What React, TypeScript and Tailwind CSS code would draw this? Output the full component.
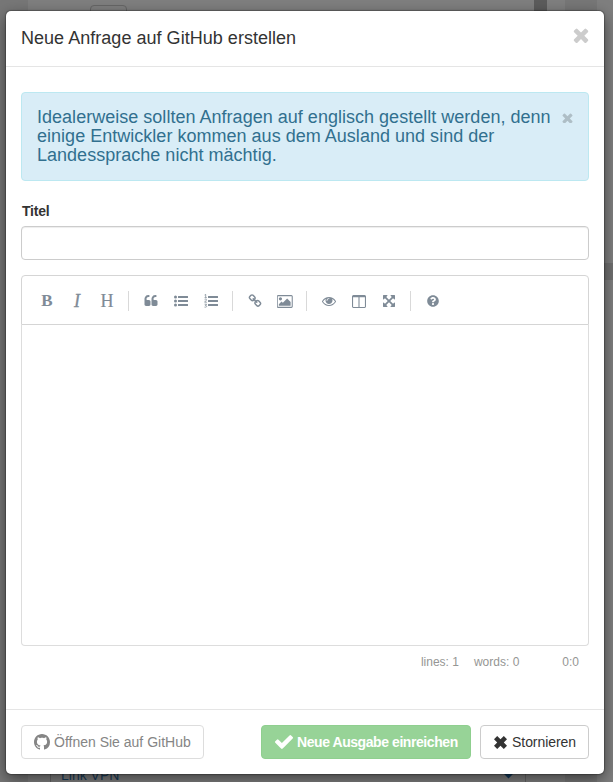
import React from 'react';
import { FaQuestionCircle } from 'react-icons/fa';

const icons = {
  quote:
    'M832 960v384q0 80-56 136t-136 56h-384q-80 0-136-56t-56-136v-704q0-104 40.5-198.5t109.5-163.5 163.5-109.5 198.5-40.5h64q26 0 45 19t19 45v128q0 26-19 45t-45 19h-64q-106 0-181 75t-75 181v32q0 40 28 68t68 28h224q80 0 136 56t56 136zm896 0v384q0 80-56 136t-136 56h-384q-80 0-136-56t-56-136v-704q0-104 40.5-198.5t109.5-163.5 163.5-109.5 198.5-40.5h64q26 0 45 19t19 45v128q0 26-19 45t-45 19h-64q-106 0-181 75t-75 181v32q0 40 28 68t68 28h224q80 0 136 56t56 136z',
  link:
    'M1520 1216q0-40-28-68l-208-208q-28-28-68-28-42 0-72 32 3 3 19 18.5t21.5 21.5 15 19 13 25.5 3.5 27.5q0 40-28 68t-68 28q-15 0-27.5-3.5t-25.5-13-19-15-21.5-21.5-18.5-19q-33 31-33 73 0 40 28 68l206 207q27 27 68 27 40 0 68-26l147-146q28-28 28-67zm-703-705q0-40-28-68l-206-207q-28-28-68-28-39 0-68 27l-147 146q-28 28-28 67 0 40 28 68l208 208q27 27 68 27 42 0 72-31-3-3-19-18.5t-21.5-21.5-15-19-13-25.5-3.5-27.5q0-40 28-68t68-28q15 0 27.5 3.5t25.5 13 19 15 21.5 21.5 18.5 19q33-31 33-73zm895 705q0 120-85 203l-147 146q-83 83-203 83-121 0-204-85l-206-207q-83-83-83-203 0-123 88-209l-88-88q-86 88-208 88-120 0-204-84l-208-208q-84-84-84-204t85-203l147-146q83-83 203-83 121 0 204 85l206 207q83 83 83 203 0 123-88 209l88 88q86-88 208-88 120 0 204 84l208 208q84 84 84 204z',
  picture:
    'M576 576q0 80-56 136t-136 56-136-56-56-136 56-136 136-56 136 56 56 136zm1024 384v448h-1408v-192l320-320 160 160 512-512zm96-704h-1600q-13 0-22.5 9.5t-9.5 22.5v1216q0 13 9.5 22.5t22.5 9.5h1600q13 0 22.5-9.5t9.5-22.5v-1216q0-13-9.5-22.5t-22.5-9.5zm160 32v1216q0 66-47 113t-113 47h-1600q-66 0-113-47t-47-113v-1216q0-66 47-113t113-47h1600q66 0 113 47t47 113z',
  eye:
    'M1664 960q-152-236-381-353 61 104 61 225 0 185-131.5 316.5t-316.5 131.5-316.5-131.5-131.5-316.5q0-121 61-225-229 117-381 353 133 205 333.5 326.5t434.5 121.5 434.5-121.5 333.5-326.5zm-720-384q0-20-14-34t-34-14q-125 0-214.5 89.5t-89.5 214.5q0 20 14 34t34 14 34-14 14-34q0-86 61-147t147-61q20 0 34-14t14-34zm848 384q0 34-20 69-140 230-376.5 368.5t-499.5 138.5-499.5-139-376.5-368q-20-35-20-69t20-69q140-229 376.5-368t499.5-139 499.5 139 376.5 368q20 35 20 69z',
  columns:
    'M160 1536h608v-1152h-640v1120q0 13 9.5 22.5t22.5 9.5zm1376-32v-1120h-640v1152h608q13 0 22.5-9.5t9.5-22.5zm128-1216v1216q0 66-47 113t-113 47h-1344q-66 0-113-47t-47-113v-1216q0-66 47-113t113-47h1344q66 0 113 47t47 113z',
  arrows:
    'M1411 541l-355 355 355 355 144-144q29-31 70-14 39 17 39 59v448q0 26-19 45t-45 19h-448q-42 0-59-40-17-39 14-69l144-144-355-355-355 355 144 144q31 30 14 69-17 40-59 40h-448q-26 0-45-19t-19-45v-448q0-42 40-59 39-17 69 14l144 144 355-355-355-355-144 144q-19 19-45 19-12 0-24-5-40-17-40-59v-448q0-26 19-45t45-19h448q42 0 59 40 17 39-14 69l-144 144 355 355 355-355-144-144q-31-30-14-69 17-40 59-40h448q26 0 45 19t19 45v448q0 42-39 59-13 5-25 5-26 0-45-19z',
  check:
    'M1671 566q0 40-28 68l-724 724-136 136q-28 28-68 28t-68-28l-136-136-362-362q-28-28-28-68t28-68l136-136q28-28 68-28t68 28l294 295 656-657q28-28 68-28t68 28l136 136q28 28 28 68z',
  close:
    'M1490 1322q0 40-28 68l-136 136q-28 28-68 28t-68-28l-294-294-294 294q-28 28-68 28t-68-28l-136-136q-28-28-28-68t28-68l294-294-294-294q-28-28-28-68t28-68l136-136q28-28 68-28t68 28l294 294 294-294q28-28 68-28t68 28l136 136q28 28 28 68t-28 68l-294 294 294 294q28 28 28 68z',
};

function Glyph({ d, box = '0 0 1792 1792', className = 'h-[14px] w-[14px]' }: { d: string; box?: string; className?: string }) {
  return (
    <svg viewBox={box} fill="currentColor" className={className}>
      <path d={d} />
    </svg>
  );
}

function ListGlyph({ ordered = false }: { ordered?: boolean }) {
  return (
    <svg viewBox="0 0 14 14" fill="currentColor" className="h-[14px] w-[14px]">
      {ordered ? (
        <g fill="none" stroke="currentColor" strokeWidth="0.8">
          <path d="M.6 1 1.7.4v3.2M.5 3.7h2.4M.6 5.7c1-1 2.2-.5 1.8.4L.6 8.2h2.3M.6 10.2h2L1.4 11.5c2-.2 1.7 2.2-.9 1.6" />
        </g>
      ) : (
        <g>
          <circle cx="1.5" cy="3" r="1.5" />
          <circle cx="1.5" cy="7" r="1.5" />
          <circle cx="1.5" cy="11" r="1.5" />
        </g>
      )}
      <rect x="4" y="2" width="10" height="2" rx=".3" />
      <rect x="4" y="6" width="10" height="2" rx=".3" />
      <rect x="4" y="10" width="10" height="2" rx=".3" />
    </svg>
  );
}

function Tool({ children }: { children: React.ReactNode }) {
  return <button className="flex h-[30px] w-[30px] items-center justify-center">{children}</button>;
}

function Separator() {
  return <i className="mr-[7px] ml-[6px] h-5 w-px bg-[#d9d9d9]" />;
}

function Backdrop() {
  return (
    <div className="absolute inset-0 flex flex-col justify-between bg-[#7f7f7f]">
      <div className="absolute inset-y-0 left-0 w-[28px] bg-[#777]" />
      <div className="absolute top-0 left-[534px] h-3 w-[13px] bg-[#5c5c5c]" />
      <div className="absolute inset-y-0 left-[565px] w-[32px] bg-[#777]" />
      <div className="absolute top-[263px] right-0 h-[17px] w-[9px] bg-[#707070]" />
      <div className="mt-[5px] ml-[90px] h-6 w-[37px] rounded border border-[#666]" />
      <div className="ml-[50px] flex h-5 w-[476px] items-center justify-between border-x border-[#666] pr-[13px] pl-[10px] text-[14px] text-[#1a3d5a]">
        <span className="pt-[5px] leading-4">Link VPN</span>
        <span className="mt-[2px] h-[7px] w-[7px] rotate-45 bg-[#123a5c]" />
      </div>
    </div>
  );
}

export default function App() {
  return (
    <div className="relative h-[782px] w-[613px] overflow-hidden pt-[11px] pl-[6px] font-['Liberation_Sans',Arial,sans-serif] text-[#333]">
      <Backdrop />
      <main className="relative flex h-[763px] w-[598px] flex-col rounded-[5px] bg-white shadow-[0_5px_15px_rgba(0,0,0,0.5),0_0_1px_1px_rgba(0,0,0,0.25)]">
        <header className="flex h-[56px] shrink-0 justify-between border-b border-[#e5e5e5] pr-[15px] pl-[15px]">
          <h1 className="pt-[17px] text-[18px] leading-5 tracking-[0.03px]">Neue Anfrage auf GitHub erstellen</h1>
          <button className="mt-[16px] h-4 w-4 text-[#ccc]">
            <Glyph d={icons.close} box="302 238 1188 1316" className="h-4 w-4" />
          </button>
        </header>
        <section className="flex grow flex-col px-[15px] pt-[25px]">
          <div className="flex h-[89px] shrink-0 justify-between rounded-[4px] border border-[#bce8f1] bg-[#d9edf7] pt-[15px] pr-[15px] pl-[15px] text-[#31708f]">
            <p className="text-[18px] leading-[19px] tracking-[0.02px] whitespace-nowrap">
              Idealerweise sollten Anfragen auf englisch gestellt werden, denn
              <br />
              einige Entwickler kommen aus dem Ausland und sind der
              <br />
              Landessprache nicht mächtig.
            </p>
            <button className="mt-[5px] h-[10px] w-[11px] text-[#aebec6]">
              <Glyph d={icons.close} box="302 302 1188 1188" className="h-[10px] w-[11px]" />
            </button>
          </div>
          <label className="mt-[20px] pl-px text-[14px] leading-5 font-bold tracking-[-0.2px]">Titel</label>
          <input className="mt-[5px] h-[34px] shrink-0 rounded-[4px] border border-[#ccc] shadow-[inset_0_1px_1px_rgba(0,0,0,0.075)]" />
          <div className="mt-[15px] flex h-[50px] shrink-0 items-center rounded-t-[4px] border border-[#d5d5d5] pt-[2px] pl-[10px] font-['Liberation_Serif',serif] text-[18px] text-[#7f8b97]">
            <div className="flex items-center">
              <Tool><b className="text-[17px]">B</b></Tool>
              <Tool><i className="[-webkit-text-stroke:0.3px_#7f8b97]">I</i></Tool>
              <Tool><span className="[-webkit-text-stroke:0.2px_#7f8b97]">H</span></Tool>
              <Separator />
              <Tool><Glyph d={icons.quote} /></Tool>
              <Tool><ListGlyph /></Tool>
              <Tool><ListGlyph ordered /></Tool>
              <Separator />
              <Tool><Glyph d={icons.link} /></Tool>
              <Tool><Glyph d={icons.picture} box="0 0 1856 1792" className="h-[15px] w-4" /></Tool>
              <Separator />
              <Tool><Glyph d={icons.eye} /></Tool>
              <Tool><Glyph d={icons.columns} box="0 128 1664 1536" className="h-[13px] w-[14px]" /></Tool>
              <Tool><Glyph d={icons.arrows} /></Tool>
              <Separator />
              <Tool><FaQuestionCircle className="h-3 w-3" /></Tool>
            </div>
          </div>
          <div className="h-[321px] shrink-0 rounded-b-[4px] border border-t-0 border-[#ddd]" />
          <div className="flex justify-end pt-[9px] pr-[10px] text-[12px] leading-[14px] text-[#959694]">
            <span>lines: 1</span>
            <span className="ml-[15px]">words: 0</span>
            <span className="ml-[43px]">0:0</span>
          </div>
        </section>
        <footer className="flex h-[65px] shrink-0 border-t border-[#e5e5e5] px-[15px] pt-[15px] text-[14px]">
          <button className="flex h-[34px] w-[183px] items-center gap-[4px] rounded-[4px] border border-[#ddd] pl-3 whitespace-nowrap text-[#858585]">
            <svg viewBox="0 0 16 16" fill="currentColor" className="h-4 w-4">
              <path d="M8 0C3.58 0 0 3.58 0 8c0 3.54 2.29 6.53 5.47 7.59.4.07.55-.17.55-.38 0-.19-.01-.82-.01-1.49-2.01.37-2.53-.49-2.69-.94-.09-.23-.48-.94-.82-1.13-.28-.15-.68-.52-.01-.53.63-.01 1.08.58 1.23.82.72 1.21 1.87.87 2.33.66.07-.52.28-.87.51-1.07-1.78-.2-3.64-.89-3.64-3.95 0-.87.31-1.59.82-2.15-.08-.2-.36-1.02.08-2.12 0 0 .67-.21 2.2.82.64-.18 1.32-.27 2-.27s1.36.09 2 .27c1.53-1.04 2.2-.82 2.2-.82.44 1.1.16 1.92.08 2.12.51.56.82 1.27.82 2.15 0 3.07-1.87 3.75-3.65 3.95.29.25.54.73.54 1.48 0 1.07-.01 1.93-.01 2.2 0 .21.15.46.55.38A8.01 8.01 0 0 0 16 8c0-4.42-3.58-8-8-8z" />
            </svg>
            <span>Öffnen Sie auf GitHub</span>
          </button>
          <button className="ml-[57px] flex h-[34px] w-[210px] items-center gap-[4px] rounded-[4px] border border-[#8fcf8f] bg-[#97d397] pl-[13px] font-bold whitespace-nowrap text-white">
            <Glyph d={icons.check} box="121 334 1550 1188" className="h-[14px] w-[18px]" />
            <span className="tracking-[-0.43px]">Neue Ausgabe einreichen</span>
          </button>
          <button className="ml-[9px] flex h-[34px] w-[109px] items-center gap-[5px] rounded-[4px] border border-[#ccc] pl-[13px]">
            <svg viewBox="0 0 13 13" fill="currentColor" className="mt-px h-[13px] w-[13px]">
              <path d="M3.2 0 6.5 3.2 9.8 0 13 3.2 9.8 6.5 13 9.8 9.8 13 6.5 9.8 3.2 13 0 9.8 3.2 6.5 0 3.2Z" />
            </svg>
            <span className="tracking-[-0.05px]">Stornieren</span>
          </button>
        </footer>
      </main>
    </div>
  );
}
